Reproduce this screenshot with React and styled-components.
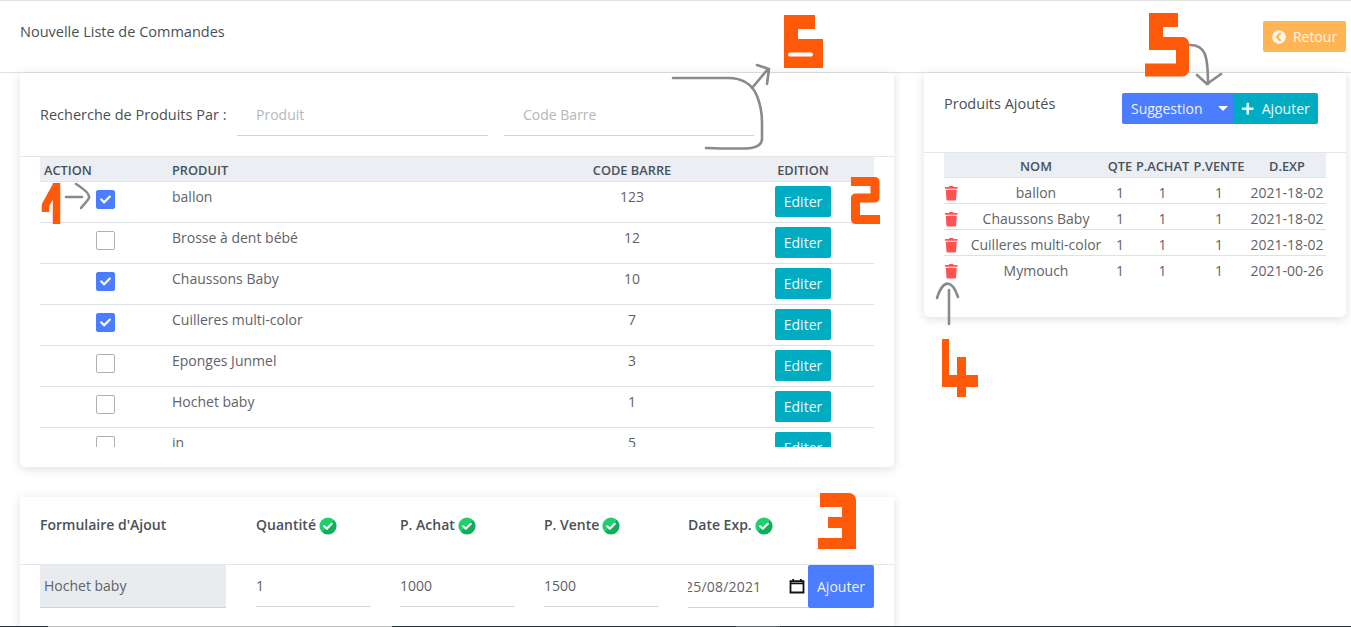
import React from 'react';
import styled, { createGlobalStyle } from 'styled-components';
import { FaChevronCircleLeft, FaPlus, FaTrash, FaCheck } from 'react-icons/fa';

const GlobalStyle = createGlobalStyle`
  html, body {
    margin: 0;
    padding: 0;
    background: #fff;
    overflow: hidden;
  }
  body {
    font-family: "Open Sans", "Liberation Sans", sans-serif;
    font-size: 14px;
    color: #5a5f63;
  }
  * { box-sizing: border-box; }
`;

const Page = styled.div`
  position: relative;
  width: 1351px;
  height: 627px;
  overflow: hidden;
  border-top: 1px solid #dfe1e4;
`;

const TopBar = styled.header`
  display: flex;
  justify-content: space-between;
  align-items: flex-start;
  height: 72px;
  padding: 20px 5px 0 20px;
  border-bottom: 1px solid #dee2e6;
`;

const PageTitle = styled.h1`
  margin: 0;
  font-size: 14.5px;
  line-height: 21px;
  font-weight: 500;
  color: #4a4f54;
`;

const BaseButton = styled.button`
  display: inline-flex;
  align-items: center;
  justify-content: center;
  gap: 6px;
  border: 0;
  padding: 0;
  font-family: inherit;
  font-size: 14px;
  color: #fff;
  border-radius: 2px;
`;

const BackButton = styled(BaseButton)`
  width: 83px;
  height: 31px;
  background: #ffb554;
  color: #fff6e8;
  font-weight: 500;
  gap: 7px;
  svg { font-size: 14px; }
`;

const Columns = styled.main`
  display: grid;
  grid-template-columns: 874px 422px;
  gap: 30px;
  padding: 0 5px 0 20px;
`;

const Stack = styled.div`
  display: flex;
  flex-direction: column;
  gap: 30px;
`;

const Card = styled.section`
  background: #fff;
  border-radius: 0 0 5px 5px;
  box-shadow: 0 2px 10px rgba(40, 50, 60, 0.16);
`;

const SearchCard = styled(Card)`
  height: 394px;
`;

const SideCard = styled(Card)`
  height: 244px;
`;

const SearchBar = styled.div`
  display: flex;
  align-items: flex-start;
  height: 84px;
  padding: 21px 20px 0;
  border-bottom: 1px solid #e4e6e9;
`;

const SearchLabel = styled.span`
  width: 197px;
  line-height: 41px;
  font-size: 14.5px;
  font-weight: 500;
  color: #4a4f54;
  white-space: nowrap;
`;

const UnderlineInput = styled.input`
  display: block;
  width: ${p => p.$w}px;
  height: 42px;
  padding: 0 0 0 ${p => p.$pad ?? 19}px;
  margin-right: ${p => p.$mr ?? 0}px;
  border: 0;
  border-bottom: 1px solid #ced4da;
  border-radius: 0;
  outline: 0;
  background: transparent;
  font-family: inherit;
  font-size: 14px;
  color: #5a5f63;
  &::placeholder { color: #b3b8bd; opacity: 1; }
`;

const TableWrap = styled.div`
  margin: 0 20px;
  height: 290px;
  overflow: hidden;
`;

const productCols = '128px 364px 200px 142px';
const addedCols = '23px 138px 30px 55px 58px 78px';

const HeadRow = styled.div`
  display: grid;
  grid-template-columns: ${p => p.$cols};
  height: 25px;
  background: #ebeef3;
  border-bottom: 1px solid #e1e4e8;
`;

const HeadCell = styled.div`
  font-size: 12.8px;
  line-height: 27px;
  font-weight: 600;
  color: #48525c;
  white-space: nowrap;
  text-align: ${p => p.$align || 'center'};
  padding-left: ${p => p.$pad || 0}px;
`;

const ProductRow = styled.div`
  display: grid;
  grid-template-columns: ${productCols};
  height: 41px;
  border-bottom: 1px solid #dee2e6;
`;

const ProductCell = styled.div`
  padding-top: 4px;
  line-height: 21px;
  color: #5f6367;
  text-align: ${p => p.$center ? 'center' : 'left'};
  padding-left: ${p => p.$pad || 0}px;
`;

const CheckCell = styled.div`
  padding: 8px 0 0 56px;
`;

const Check = styled.span`
  display: flex;
  align-items: center;
  justify-content: center;
  width: 19px;
  height: 19px;
  border-radius: 2px;
  border: 1px solid ${p => p.$on ? '#4a7dff' : '#adb1b5'};
  background: ${p => p.$on ? '#4a7dff' : '#fff'};
  color: #fff;
  font-size: 11px;
`;

const EditCell = styled.div`
  padding-top: 4px;
  text-align: center;
`;

const TealButton = styled(BaseButton)`
  background: #00acc1;
  color: #eafafc;
`;

const EditButton = styled(TealButton)`
  width: 56px;
  height: 31px;
`;

const SideHeader = styled.div`
  position: relative;
  display: flex;
  justify-content: space-between;
  align-items: flex-start;
  height: 80px;
  padding: 20px 28px 0 20px;
  border-bottom: 1px solid #e4e6e9;
`;

const SideTitle = styled.span`
  line-height: 21px;
  font-size: 14.5px;
  font-weight: 500;
  color: #4a4f54;
`;

const ButtonGroup = styled.div`
  display: flex;
`;

const SuggestButton = styled(BaseButton)`
  justify-content: flex-start;
  width: 111px;
  height: 31px;
  padding-left: 9px;
  background: #4a7dff;
  color: #eef3ff;
  border-radius: 2px 0 0 2px;
  gap: 0;
`;

const Caret = styled.i`
  width: 0;
  height: 0;
  margin-left: 15px;
  border: 5px solid transparent;
  border-top-color: #fff;
  border-bottom: 0;
`;

const AddButton = styled(TealButton)`
  width: 85px;
  height: 31px;
  border-radius: 0 2px 2px 0;
  gap: 7px;
  svg { font-size: 13.5px; }
`;

const AddedTable = styled.div`
  margin: 0 20px;
`;

const AddedRow = styled.div`
  display: grid;
  grid-template-columns: ${addedCols};
  height: 26px;
  border-bottom: ${p => p.$last ? 0 : '1px solid #dee2e6'};
`;

const AddedCell = styled.div`
  line-height: 30px;
  font-size: 14px;
  color: #5f6367;
  text-align: center;
  white-space: nowrap;
`;

const TrashCell = styled.div`
  display: flex;
  align-items: center;
  padding: 1px 0 0 0;
  color: #ff5252;
  font-size: 14.5px;
`;

const FormHeader = styled.div`
  display: flex;
  height: 68px;
  padding: 17px 20px 0;
  border-bottom: 1px solid #e4e6e9;
`;

const FormHeading = styled.div`
  display: flex;
  align-items: flex-start;
  gap: 3px;
  width: ${p => p.$w}px;
  line-height: 21px;
  font-weight: 600;
  color: #4a5057;
  svg { margin-top: 3px; }
`;

const FormFields = styled.div`
  display: flex;
  padding: 0 20px;
  height: 64px;
`;

const ReadOnlyField = styled.div`
  width: 186px;
  height: 43px;
  margin-right: 30px;
  padding-left: 4px;
  line-height: 42px;
  background: #e9ecef;
  border-bottom: 1px solid #ced4da;
  color: #5f6367;
`;

const DateField = styled.div`
  display: flex;
  align-items: center;
  justify-content: space-between;
  width: 120px;
  height: 43px;
  padding-right: 3px;
  border-bottom: 1px solid #ced4da;
  color: #5f6367;
  overflow: hidden;
`;

const DateValue = styled.span`
  margin-left: -3px;
  letter-spacing: 0.2px;
`;

const SubmitButton = styled(BaseButton)`
  width: 66px;
  height: 43px;
  background: #4a7dff;
  color: #eef3ff;
`;

const BottomEdge = styled.div`
  position: absolute;
  left: 0;
  right: 0;
  bottom: 0;
  height: 1px;
  background: linear-gradient(to right,
    #263238 0 48px, #bdbdbd 48px 392px, #263238 392px 736px,
    #5a5f63 736px 780px, #263238 780px);
`;

const Annotations = styled.svg`
  position: absolute;
  left: 0;
  top: -1px;
  pointer-events: none;
`;

const Marker = styled.path`
  fill: none;
  stroke: #ff5a0a;
  stroke-width: ${p => p.$w || 8};
  stroke-linejoin: round;
  stroke-linecap: butt;
`;

const Pencil = styled.path`
  fill: none;
  stroke: #8a8a8a;
  stroke-width: 2.6;
  stroke-linecap: round;
  stroke-linejoin: round;
`;

const GreenCheck = ({ id }) => (
  <svg width="18" height="18" viewBox="0 0 18 18">
    <defs>
      <linearGradient id={id} x1="0" y1="0" x2="1" y2="1">
        <stop offset="0.5" stopColor="#1fce6d" />
        <stop offset="0.5" stopColor="#0fae5a" />
      </linearGradient>
    </defs>
    <circle cx="9" cy="9" r="8.6" fill={`url(#${id})`} />
    <path d="M5.2 9.3l2.6 2.5 5-5" fill="none" stroke="#fff" strokeWidth="2.2" strokeLinecap="round" strokeLinejoin="round" />
  </svg>
);

const CalendarIcon = () => (
  <svg width="16" height="16" viewBox="0 0 16 16">
    <path d="M1.5 3.2h13v11.3h-13zM1.5 5.4h13" fill="none" stroke="#111" strokeWidth="1.8" />
    <path d="M4.2 1v2.5M11.8 1v2.5" stroke="#111" strokeWidth="1.8" />
  </svg>
);

const products = [
  { name: 'ballon', code: 123, on: true },
  { name: 'Brosse à dent bébé', code: 12 },
  { name: 'Chaussons Baby', code: 10, on: true },
  { name: 'Cuilleres multi-color', code: 7, on: true },
  { name: 'Eponges Junmel', code: 3 },
  { name: 'Hochet baby', code: 1 },
  { name: 'in', code: 5 },
];

const added = [
  { name: 'ballon', date: '2021-18-02' },
  { name: 'Chaussons Baby', date: '2021-18-02' },
  { name: 'Cuilleres multi-color', date: '2021-18-02' },
  { name: 'Mymouch', date: '2021-00-26' },
];

const App = () => {
  return (
    <Page>
      <GlobalStyle />
      <TopBar>
        <PageTitle>Nouvelle Liste de Commandes</PageTitle>
        <BackButton><FaChevronCircleLeft /> Retour</BackButton>
      </TopBar>

      <Columns>
        <Stack>
          <SearchCard>
            <SearchBar>
              <SearchLabel>Recherche de Produits Par :</SearchLabel>
              <UnderlineInput $w={251} $mr={16} placeholder="Produit" />
              <UnderlineInput $w={250} placeholder="Code Barre" />
            </SearchBar>
            <TableWrap>
              <HeadRow $cols={productCols}>
                <HeadCell $align="left" $pad={4}>ACTION</HeadCell>
                <HeadCell $align="left" $pad={4}>PRODUIT</HeadCell>
                <HeadCell>CODE BARRE</HeadCell>
                <HeadCell>EDITION</HeadCell>
              </HeadRow>
              {products.map(p => (
                <ProductRow key={p.name}>
                  <CheckCell>
                    <Check $on={p.on}>{p.on && <FaCheck />}</Check>
                  </CheckCell>
                  <ProductCell $pad={4}>{p.name}</ProductCell>
                  <ProductCell $center>{p.code}</ProductCell>
                  <EditCell><EditButton>Editer</EditButton></EditCell>
                </ProductRow>
              ))}
            </TableWrap>
          </SearchCard>

          <Card>
            <FormHeader>
              <FormHeading $w={216}>Formulaire d'Ajout</FormHeading>
              <FormHeading $w={144}>Quantité <GreenCheck id="g1" /></FormHeading>
              <FormHeading $w={144}>P. Achat <GreenCheck id="g2" /></FormHeading>
              <FormHeading $w={144}>P. Vente <GreenCheck id="g3" /></FormHeading>
              <FormHeading $w={120}>Date Exp. <GreenCheck id="g4" /></FormHeading>
            </FormHeader>
            <FormFields>
              <ReadOnlyField>Hochet baby</ReadOnlyField>
              <UnderlineInput $w={114} $mr={30} $pad={0} defaultValue="1" />
              <UnderlineInput $w={114} $mr={30} $pad={0} defaultValue="1000" />
              <UnderlineInput $w={114} $mr={30} $pad={0} defaultValue="1500" />
              <DateField>
                <DateValue>25/08/2021</DateValue>
                <CalendarIcon />
              </DateField>
              <SubmitButton>Ajouter</SubmitButton>
            </FormFields>
          </Card>
        </Stack>

        <SideCard>
          <SideHeader>
            <SideTitle>Produits Ajoutés</SideTitle>
            <ButtonGroup>
              <SuggestButton>Suggestion<Caret /></SuggestButton>
              <AddButton><FaPlus /> Ajouter</AddButton>
            </ButtonGroup>
          </SideHeader>
          <AddedTable>
            <HeadRow $cols={addedCols}>
              <HeadCell />
              <HeadCell>NOM</HeadCell>
              <HeadCell>QTE</HeadCell>
              <HeadCell>P.ACHAT</HeadCell>
              <HeadCell>P.VENTE</HeadCell>
              <HeadCell>D.EXP</HeadCell>
            </HeadRow>
            {added.map((a, i) => (
              <AddedRow key={a.name} $last={i === added.length - 1}>
                <TrashCell><FaTrash /></TrashCell>
                <AddedCell>{a.name}</AddedCell>
                <AddedCell>1</AddedCell>
                <AddedCell>1</AddedCell>
                <AddedCell>1</AddedCell>
                <AddedCell>{a.date}</AddedCell>
              </AddedRow>
            ))}
          </AddedTable>
        </SideCard>
      </Columns>

      <BottomEdge />

      {/* felt-tip notes and pencil arrows scribbled over the page */}
      <Annotations width="1351" height="627" viewBox="0 0 1351 627">
        <Marker $w={7.5} d="M56.5 183V224M45.5 212L45.5 205L56 186" />
        <Marker $w={9} d="M851 181.5H875V198H855.5V219.5H880" />
        <Marker $w={14} d="M820 500H849V549" />
        <Marker $w={11} d="M828 522.5H849M818 543.5H856" />
        <Marker $w={7} d="M945.5 339V381" />
        <Marker $w={12} d="M942 381H978" />
        <Marker $w={9} d="M961.5 357V397" />
        <Marker $w={14} d="M1149 20H1178M1156 13V50" />
        <Marker $w={13} d="M1156 43.5H1182.5V70H1145" />
        <Marker $w={14} d="M784 22H815M791 15V68" />
        <Marker $w={29} d="M784 53.5H823" />
        <path d="M790 54.5H811" stroke="#fff" strokeWidth="4" strokeLinecap="round" />
        <Pencil d="M66 197H82M76 184C84 189 90 194 89 198C87 202 83 205 81 208" />
        <Pencil d="M673 78H728C745 78 753 86 757 96C761 106 762 112 762 122V140C760 150 750 149 706 148M752 88L768 69M757 65L769 69L767 84" />
        <Pencil d="M1190 45C1205 45 1208 55 1208 84M1197 75L1207 84L1221 74" />
        <Pencil d="M949 290V324M937 298C943 279 952 279 958 297" />
      </Annotations>
    </Page>
  );
};

export default App;
